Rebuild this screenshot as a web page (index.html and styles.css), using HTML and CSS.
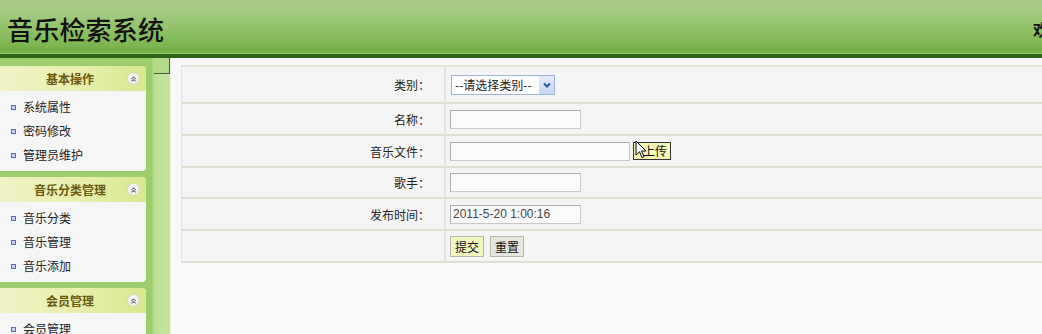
FILE: index.html
```html
<!DOCTYPE html>
<html lang="zh">
<head>
<meta charset="utf-8">
<title>音乐检索系统</title>
<link rel="stylesheet" href="styles.css">
</head>
<body>
<div class="page">
  <header class="top">
    <div class="title">音乐检索系统</div>
    <div class="welcome">欢迎您：admin</div>
  </header>
  <div class="body">
    <aside class="side">
      <section class="panel">
        <div class="panel-head"><span>基本操作</span><i class="fold"><svg viewBox="0 0 12 12" width="12" height="12"><path d="M3.5 6 L6 3.8 L8.5 6 M3.5 8.6 L6 6.4 L8.5 8.6" fill="none" stroke="#777" stroke-width="1.1"/></svg></i></div>
        <ul class="items">
          <li>系统属性</li>
          <li>密码修改</li>
          <li>管理员维护</li>
        </ul>
      </section>
      <section class="panel">
        <div class="panel-head"><span>音乐分类管理</span><i class="fold"><svg viewBox="0 0 12 12" width="12" height="12"><path d="M3.5 6 L6 3.8 L8.5 6 M3.5 8.6 L6 6.4 L8.5 8.6" fill="none" stroke="#777" stroke-width="1.1"/></svg></i></div>
        <ul class="items">
          <li>音乐分类</li>
          <li>音乐管理</li>
          <li>音乐添加</li>
        </ul>
      </section>
      <section class="panel">
        <div class="panel-head"><span>会员管理</span><i class="fold"><svg viewBox="0 0 12 12" width="12" height="12"><path d="M3.5 6 L6 3.8 L8.5 6 M3.5 8.6 L6 6.4 L8.5 8.6" fill="none" stroke="#777" stroke-width="1.1"/></svg></i></div>
        <ul class="items">
          <li>会员管理</li>
        </ul>
      </section>
    </aside>
    <div class="split"><div class="split-btn"></div></div>
    <main class="main">
      <div class="form">
        <div class="row r1"><div class="lab">类别：</div><div class="val"><div class="select"><span>--请选择类别--</span><b class="arrow"><svg viewBox="0 0 10 10" width="10" height="10"><path d="M2 3.5 L5 6.5 L8 3.5" fill="none" stroke="#2a5aa8" stroke-width="2"/></svg></b></div></div></div>
        <div class="row"><div class="lab">名称：</div><div class="val"><span class="inp"></span></div></div>
        <div class="row"><div class="lab">音乐文件：</div><div class="val"><span class="inp wide"></span><span class="up">上传</span>
          <svg class="cursor" viewBox="0 0 12 20" width="12" height="20"><path d="M1 1 L1 15 L4.5 11.8 L7 17.5 L9 16.6 L6.6 11 L11 11 Z" fill="#fff" stroke="#000" stroke-width="1"/></svg></div></div>
        <div class="row r4"><div class="lab">歌手：</div><div class="val"><span class="inp"></span></div></div>
        <div class="row"><div class="lab">发布时间：</div><div class="val"><span class="inp date">2011-5-20 1:00:16</span></div></div>
        <div class="row"><div class="lab"></div><div class="val"><span class="btn submit">提交</span><span class="btn reset">重置</span></div></div>
      </div>
    </main>
  </div>
</div>
</body>
</html>
```
FILE: styles.css
```css
html, body {
  margin: 0;
  padding: 0;
  background: #f7f7f7;
}
body {
  font-family: "Noto Sans CJK SC", "Liberation Sans", sans-serif;
  font-size: 12px;
  color: #222;
}
.page {
  width: 1042px;
  height: 334px;
  overflow: hidden;
}
.top {
  height: 53px;
  display: grid;
  grid-template-columns: 1033px 200px;
  align-items: center;
  background: linear-gradient(#abc88a 0%, #9dc878 35%, #86bc5c 70%, #6fae45 100%);
  border-bottom: 1px solid #93cc6c;
  box-shadow: inset 0 -1px 0 #7ab54f;
  white-space: nowrap;
  overflow: hidden;
}
.title {
  padding-left: 7px;
  font-size: 26px;
  letter-spacing: 0.2px;
  color: #111;
  padding-top: 4px;
  font-weight: 500;
}
.welcome {
  font-size: 16px;
  font-weight: bold;
  color: #111;
  padding-top: 4px;
}
.body {
  display: flex;
  border-top: 4px solid #2c6515;
  height: 300px;
}
.side {
  flex: 0 0 146px;
  padding: 8px 6px 0 0;
  background: #9bcd6c;
  display: flex;
  flex-direction: column;
  gap: 6px;
}
.panel {
  background: #f6f6f6;
  border-radius: 0 4px 4px 0;
}
.panel-head {
  height: 25px;
  display: flex;
  align-items: center;
  justify-content: center;
  position: relative;
  background: linear-gradient(90deg, #f1f2c8 0%, #e8eeac 55%, #d7e88e 100%);
  border-radius: 0 4px 0 0;
  font-weight: bold;
  color: #6a5a12;
  padding-right: 4px;
}
.panel-head span {
  margin-left: -2px;
}
.fold {
  position: absolute;
  right: 6px;
  top: 6px;
  width: 13px;
  height: 13px;
  border-radius: 50%;
  background: radial-gradient(circle at 40% 35%, #ffffff, #e6e6dc);
  border: 1px solid #d8d8c8;
  display: flex;
  align-items: center;
  justify-content: center;
  box-sizing: border-box;
}
.items {
  list-style: none;
  margin: 0;
  padding: 4px 0 4px 0;
}
.items li {
  height: 24px;
  line-height: 24px;
  padding-left: 23px;
  position: relative;
  color: #222;
}
.items li::before {
  content: "";
  position: absolute;
  left: 11px;
  top: 10px;
  width: 3px;
  height: 3px;
  border: 1px solid #5a6fa8;
  background: #c8d4ee;
}
.split {
  flex: 0 0 18px;
  background: linear-gradient(90deg, #a3d27a 0px, #bfe196 3px, #c6e59e 100%);
}
.split-btn {
  margin-left: 2px;
  width: 15px;
  height: 15px;
  background: #b3db8a;
  border-right: 1px solid #4a5a3a;
  border-bottom: 1px solid #4a5a3a;
}
.main {
  flex: 1 1 auto;
  min-width: 0;
  overflow: hidden;
  background: #f9f9f9;
  padding: 7px 0 0 10px;
  border-left: 1px solid #eee;
}
.form {
  width: 900px;
  border-top: 2px solid #e4e4d6;
  border-left: 1px solid #e4e4d6;
  background: #f5f5f5;
}
.row {
  display: flex;
  height: 30px;
  border-bottom: 2px solid #e0e0d2;
}
.row.r1 {
  height: 35px;
}
.row.r4 {
  height: 29px;
}
.lab {
  flex: 0 0 248px;
  padding-right: 14px;
  text-align: right;
  border-right: 2px solid #e4e4d6;
  display: flex;
  align-items: center;
  justify-content: flex-end;
  color: #222;
}
.val {
  flex: 1;
  display: flex;
  align-items: center;
  padding-left: 4px;
  position: relative;
}
.select {
  margin-left: 1px;
  width: 104px;
  height: 20px;
  box-sizing: border-box;
  border: 1px solid #9fb4d6;
  background: #fff;
  display: flex;
  align-items: center;
  justify-content: space-between;
  padding-left: 3px;
  font-size: 12px;
  color: #222;
}
.arrow {
  width: 15px;
  height: 18px;
  background: linear-gradient(#e4ecfa, #c6d6f2);
  display: flex;
  align-items: center;
  justify-content: center;
}
.inp {
  display: block;
  width: 131px;
  height: 19px;
  box-sizing: border-box;
  border: 1px solid #a9a9a9;
  border-right-color: #c8c8c8;
  border-bottom-color: #c8c8c8;
  background: #fbfbfb;
}
.inp.wide {
  width: 180px;
}
.inp.date {
  font-family: "Liberation Sans", Arial, sans-serif;
  font-size: 12px;
  line-height: 17px;
  padding-left: 2px;
  color: #444;
}
.up {
  margin-left: 3px;
  height: 18px;
  line-height: 16px;
  box-sizing: border-box;
  padding: 0 3px 0 9px;
  border: 1px solid #333;
  background: #f6f7b4;
  color: #111;
}
.cursor {
  position: absolute;
  left: 189px;
  top: 4px;
}
.btn {
  height: 21px;
  line-height: 19px;
  box-sizing: border-box;
  padding: 0 4px;
  border: 1px solid #b8b8a8;
  color: #111;
}
.btn.submit {
  background: #f1f6c2;
}
.btn.reset {
  margin-left: 6px;
  background: #e6e6de;
}
```
